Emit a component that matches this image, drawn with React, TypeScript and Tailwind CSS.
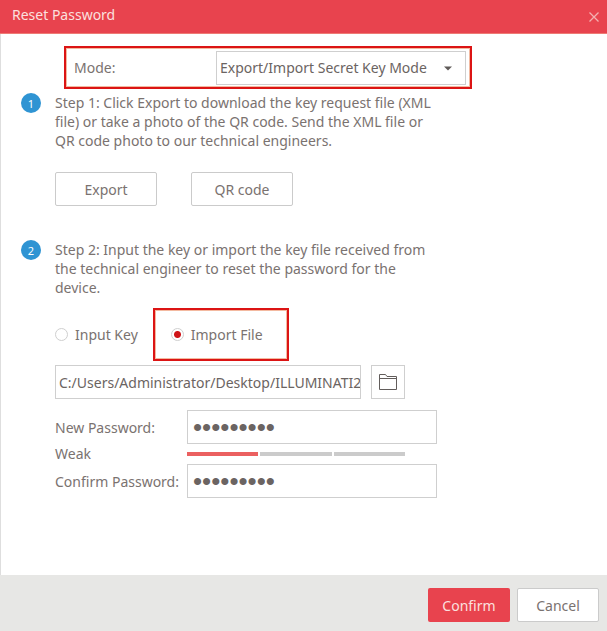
import { useState } from "react";

const field =
  "h-[34px] border border-[#cfcfcf] bg-white text-[#6b6462] outline-none";
const passwordField =
  "pl-[5px] font-['Liberation_Sans',sans-serif] text-[26px]";
const plainButton =
  "h-[34px] rounded-xs border border-[#cbcbcb] bg-white text-center text-[#7a7270]";

function StepBadge({ n }: { n: number }) {
  return (
    <span className="flex size-5 shrink-0 items-center justify-center rounded-full bg-[#2f94d3] text-[11px] text-white">
      {n}
    </span>
  );
}

function Radio({
  label,
  value,
  mode,
  onChange,
}: {
  label: string;
  value: string;
  mode: string;
  onChange: (value: string) => void;
}) {
  return (
    <label className="flex items-center gap-[7px]">
      <span className="grid size-[13px] place-items-center rounded-full border border-[#cfcfcf] bg-white has-checked:bg-[radial-gradient(circle,#cf1418_3px,transparent_4px)]">
        <input
          type="radio"
          name="source"
          value={value}
          checked={mode === value}
          onChange={() => onChange(value)}
          className="size-full appearance-none rounded-full outline-none"
        />
      </span>
      {label}
    </label>
  );
}

export default function App() {
  const [source, setSource] = useState("file");
  const [password, setPassword] = useState("abcdefghi");
  const [confirm, setConfirm] = useState("abcdefghi");

  return (
    <form
      onSubmit={(e) => e.preventDefault()}
      className="flex min-h-screen flex-col bg-white font-['Noto_Sans',sans-serif] text-sm leading-[19px] text-[#7a7270]"
    >
      <header className="flex h-[34px] items-center justify-between border-b border-[#ee7a74] bg-[#e8434e] pr-2 pl-3 text-[#fbe0df]">
        <h1 className="pb-1">Reset Password</h1>
        <button type="button" aria-label="Close" className="text-[#f3b0b0]">
          <svg width="10" height="10" viewBox="0 0 10 10" stroke="currentColor" strokeWidth="1.3">
            <path d="M0.5 0.5 9.5 9.5M9.5 0.5 0.5 9.5" />
          </svg>
        </button>
      </header>

      <main className="flex-1 border-l border-[#dedede] pt-3 pr-6 pb-6 pl-5">
        <div className="ml-[43px] flex h-[43px] max-w-[408px] items-center justify-between border-2 border-[#dc1414] pr-1 pl-2 inset-ring inset-ring-[#f3b9a0]">
          <label htmlFor="mode">Mode:</label>
          <div className="relative w-[250px]">
            <select id="mode" className={`${field} w-full appearance-none pr-7 pl-[3px]`}>
              <option>Export/Import Secret Key Mode</option>
            </select>
            <svg
              className="pointer-events-none absolute top-[15px] right-[14px] text-[#5f5a58]"
              width="8"
              height="5"
              viewBox="0 0 8 5"
              fill="currentColor"
            >
              <path d="M0 0.5h8L4 4.5Z" />
            </svg>
          </div>
        </div>

        <section className="mt-1 flex gap-[14px]">
          <StepBadge n={1} />
          <div>
            <p className="max-w-[385px]">
              Step 1: Click Export to download the key request file (XML file) or take a photo of
              the QR code. Send the XML file or QR code photo to our technical engineers.
            </p>
            <div className="mt-[22px] flex gap-[34px]">
              <button type="button" className={`${plainButton} w-[102px]`}>
                Export
              </button>
              <button type="button" className={`${plainButton} w-[102px]`}>
                QR code
              </button>
            </div>
          </div>
        </section>

        <section className="mt-[34px] flex gap-[14px]">
          <StepBadge n={2} />
          <div className="min-w-0 flex-1">
            <p className="max-w-[385px]">
              Step 2: Input the key or import the key file received from the technical engineer to
              reset the password for the device.
            </p>

            <div className="mt-[11px] flex gap-[15px]">
              <Radio label="Input Key" value="key" mode={source} onChange={setSource} />
              <div className="flex h-[53px] w-[136px] items-center border-2 border-[#dc1414] pl-4 inset-ring inset-ring-[#f3b9a0]">
                <Radio label="Import File" value="file" mode={source} onChange={setSource} />
              </div>
            </div>

            <div className="mt-1 flex gap-[10px]">
              <input
                type="text"
                aria-label="Key file path"
                readOnly
                value="C:/Users/Administrator/Desktop/ILLUMINATI2"
                className={`${field} w-[306px] pl-[3px]`}
              />
              <button
                type="button"
                aria-label="Browse"
                className="grid size-[34px] place-items-center border border-[#cfcfcf]"
              >
                <svg
                  width="18"
                  height="16"
                  viewBox="0 0 18 16"
                  fill="none"
                  stroke="#625d5b"
                  strokeWidth="1"
                >
                  <path d="M0.5 15.5V0.5H6.5L8 2.5H17.5V15.5ZM0.5 4.5H17.5" />
                </svg>
              </button>
            </div>

            <div className="mt-[11px] grid grid-cols-[132px_250px] items-center">
              <label htmlFor="new-password">New Password:</label>
              <input
                id="new-password"
                type="password"
                value={password}
                onChange={(e) => setPassword(e.target.value)}
                className={`${field} ${passwordField}`}
              />
              <span className="h-5">Weak</span>
              <div className="flex w-[218px] gap-[2px]">
                <span className="h-1 flex-1 bg-[#eb6060]" />
                <span className="h-1 flex-1 bg-[#cbcbcb]" />
                <span className="h-1 flex-1 bg-[#cbcbcb]" />
              </div>
              <label htmlFor="confirm-password">Confirm Password:</label>
              <input
                id="confirm-password"
                type="password"
                value={confirm}
                onChange={(e) => setConfirm(e.target.value)}
                className={`${field} ${passwordField}`}
              />
            </div>
          </div>
        </section>
      </main>

      <footer className="flex h-14 items-center justify-end gap-[7px] bg-[#e7e7e5] pt-1 pr-2">
        <button type="submit" className="h-[34px] w-[82px] rounded-xs bg-[#e8434e] text-[#fbe0df]">
          Confirm
        </button>
        <button type="button" className={`${plainButton} w-[82px]`}>
          Cancel
        </button>
      </footer>
    </form>
  );
}
